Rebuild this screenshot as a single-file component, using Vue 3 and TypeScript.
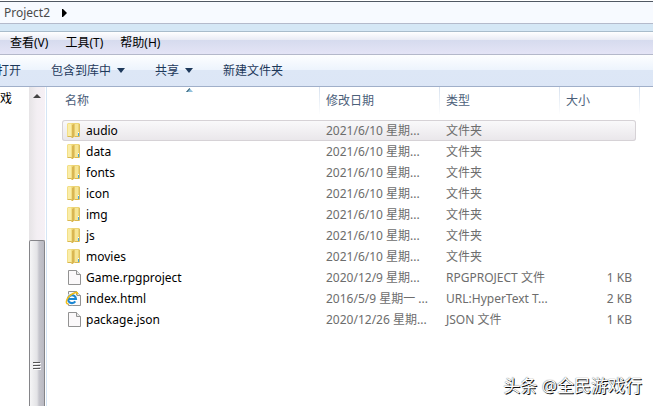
<script setup lang="ts">
import { ref } from 'vue'

type Kind = 'folder' | 'file' | 'web'

interface Entry {
  name: string
  date: string
  type: string
  size: string
  kind: Kind
}

const menus = ['查看(V)', '工具(T)', '帮助(H)']

const commands = [
  { label: '打开', menu: false },
  { label: '包含到库中', menu: true },
  { label: '共享', menu: true },
  { label: '新建文件夹', menu: false },
]

const folders: Entry[] = ['audio', 'data', 'fonts', 'icon', 'img', 'js', 'movies'].map((name) => ({
  name,
  date: '2021/6/10 星期...',
  type: '文件夹',
  size: '',
  kind: 'folder',
}))

const entries: Entry[] = [
  ...folders,
  { name: 'Game.rpgproject', date: '2020/12/9 星期...', type: 'RPGPROJECT 文件', size: '1 KB', kind: 'file' },
  { name: 'index.html', date: '2016/5/9 星期一 ...', type: 'URL:HyperText T...', size: '2 KB', kind: 'web' },
  { name: 'package.json', date: '2020/12/26 星期...', type: 'JSON 文件', size: '1 KB', kind: 'file' },
]

const selected = ref('audio')
</script>

<template>
  <div class="explorer">
    <nav class="address">
      <a href="#" class="crumb">Project2</a>
      <svg class="crumb-arrow" width="6" height="8" viewBox="0 0 6 8"><path d="M0 0h1l4 4-4 4H0z" fill="#000" /></svg>
    </nav>
    <div class="glass"></div>
    <div class="menubar">
      <button v-for="menu in menus" :key="menu" type="button">{{ menu }}</button>
    </div>
    <div class="toolbar">
      <button v-for="command in commands" :key="command.label" type="button">
        {{ command.label }}
        <svg v-if="command.menu" width="8" height="5" viewBox="0 0 8 5"><path d="M0 0h8L4 5z" fill="#1e395b" /></svg>
      </button>
    </div>

    <div class="body">
      <aside class="tree"><span>戏</span></aside>
      <div class="scrollbar">
        <svg class="up" width="8" height="5" viewBox="0 0 8 5"><path d="M4 0l4 4H0z" fill="#444" /></svg>
        <div class="thumb">
          <svg width="8" height="9" viewBox="0 0 8 9">
            <path d="M0 1.5h7M0 4.5h7M0 7.5h7" stroke="#555" />
            <path d="M1 2.5h7M1 5.5h7M1 8.5h7" stroke="#fff" />
          </svg>
        </div>
      </div>

      <main class="pane">
        <table>
          <thead>
            <tr>
              <th class="sorted">
                名称
                <svg class="sort" width="7" height="4" viewBox="0 0 7 4"><path d="M3.5 0L7 4H0z" fill="#8fc0dc" /><path d="M3.5 0L0 4h1.5L4 1z" fill="#3d6478" /></svg>
              </th>
              <th>修改日期</th>
              <th>类型</th>
              <th>大小</th>
            </tr>
          </thead>
          <tbody>
            <tr
              v-for="entry in entries"
              :key="entry.name"
              :class="{ selected: entry.name === selected }"
              @click="selected = entry.name"
            >
              <td class="name">
                <svg v-if="entry.kind === 'folder'" width="16" height="17" viewBox="0 0 16 17">
                  <path d="M4 1h8l1 1v12l-1 1H6z" fill="#ecd475" />
                  <path d="M8 2h3v12H8z" fill="#f6e595" />
                  <path d="M12 2h1v12h-1z" fill="#dcbf60" />
                  <path d="M0 2l1-1h3l2 2v13l-2-1H1l-1-1z" fill="#f3df86" />
                  <path d="M1 2h3v12H1z" fill="#faeda9" />
                  <path d="M0 14h4l2 1v1H5l-1-1H1z" fill="#d9b850" />
                  <path d="M5 3l2-1v13l-2 1z" fill="#d9b652" />
                  <path d="M7 2h1v12l-1 1z" fill="#e6ca6c" />
                  <path d="M8 14h5l-1 1H8z" fill="#d9b850" />
                  <path d="M11 11h1v3h-1z" fill="#49a7db" />
                  <path d="M11 10h1v1h-1z" fill="#fff" />
                </svg>
                <svg v-else width="16" height="17" viewBox="0 0 16 17" overflow="visible">
                  <path d="M1.500 1.500h8l4 4v10h-12z" fill="#fbf9fa" stroke="#929292" />
                  <path d="M9.500 1.500v4h4" fill="#e9e9e9" stroke="#929292" />
                  <g v-if="entry.kind === 'web'" fill="none">
                    <path d="M1.500 9h7.500A4 4 0 1 0 8.300 11.400" stroke="#fff" stroke-width="4" />
                    <path d="M1.500 9h7.500A4 4 0 1 0 8.300 11.400" stroke="#1d87d2" stroke-width="2.200" />
                    <path d="M1.500 14C-3 14.500-.5 5.500 8.500 2.500C10 2 11 3 10 4.500" stroke="#f1bd19" stroke-width="1.500" />
                  </g>
                </svg>
                <span>{{ entry.name }}</span>
              </td>
              <td>{{ entry.date }}</td>
              <td>{{ entry.type }}</td>
              <td class="size">{{ entry.size }}</td>
            </tr>
          </tbody>
        </table>
      </main>
    </div>
    <p class="watermark">头条 @全民游戏行</p>
  </div>
</template>

<style>
body {
  margin: 0;
}
</style>

<style scoped>
.explorer {
  position: relative;
  display: flex;
  flex-direction: column;
  box-sizing: border-box;
  min-height: 100vh;
  overflow: hidden;
  background: #fff;
  color: #000;
  font: 12px/16px 'Noto Sans', 'Noto Sans CJK SC', sans-serif;
}

button {
  padding: 0;
  border: 0;
  background: none;
  font: inherit;
  color: inherit;
  white-space: nowrap;
}

.address {
  display: flex;
  align-items: center;
  gap: 12px;
  height: 21px;
  margin-top: 1px;
  padding-left: 4px;
  border-top: 1px solid #505863;
  border-bottom: 1px solid #b4bacb;
  background: #f7faff;
}

.crumb {
  color: #4a4a4a;
  text-decoration: none;
}

.glass {
  height: 7px;
  border-bottom: 1px solid #a9bccb;
  background: #d5e7f5;
}

.menubar {
  display: flex;
  align-items: center;
  gap: 17px;
  height: 22px;
  padding-left: 10px;
  border-bottom: 1px solid #b4b8ca;
  background: linear-gradient(#fff, #e9ebf5 36%, #d6dbee 37%, #e4e4f6);
}

.toolbar {
  display: flex;
  align-items: center;
  gap: 30px;
  height: 31px;
  margin-left: -3px;
  border-bottom: 1px solid #a0afc9;
  background: linear-gradient(#fdfeff, #edf4fd 48%, #dde7f6 50%, #dce6f6);
  color: #1e395b;
}

.toolbar button {
  display: flex;
  align-items: center;
  gap: 6px;
}

.body {
  display: flex;
  flex: 1;
}

.tree {
  width: 29px;
  padding-top: 4px;
}

.scrollbar {
  display: flex;
  flex-direction: column;
  align-items: center;
  width: 16px;
  margin-right: 1px;
  background: linear-gradient(90deg, #e6e4e6, #f3eff3 50%, #f6f0f5);
}

.up {
  margin-top: 7px;
}

.thumb {
  display: flex;
  flex: 1;
  align-items: center;
  justify-content: center;
  box-sizing: border-box;
  width: 100%;
  margin-top: 141px;
  padding-top: 83px;
  border: 1px solid #858589;
  border-bottom: 0;
  border-radius: 2px 2px 0 0;
  background: linear-gradient(90deg, #f5f5f6, #e3e3e6 50%, #c5c5cc 65%, #b9b9c2);
}

.pane {
  flex: 1;
  min-width: 0;
  padding: 0 13px 0 15px;
  border-left: 1px solid #d5e5f5;
}

table,
thead,
tbody {
  display: block;
}

tr {
  display: grid;
  grid-template-columns: minmax(0, 1fr) 120px 120px 80px;
}

th,
td {
  padding: 0 6px;
  font-weight: normal;
  text-align: left;
  white-space: nowrap;
}

th {
  position: relative;
  height: 27px;
  line-height: 27px;
  border-right: 1px solid;
  border-image: linear-gradient(#d5e0ee, #fff) 1;
  color: #4c607a;
}

th:first-child {
  padding-left: 3px;
}

.sort {
  position: absolute;
  top: 1px;
  left: calc(50% - 5px);
}

tbody {
  margin: 6px 4px 0 0;
}

tbody tr {
  grid-template-columns: minmax(0, 1fr) 120px 120px 76px;
  height: 21px;
  border-radius: 3px;
}

td {
  line-height: 21px;
  color: #6d6d6d;
}

.selected {
  background: linear-gradient(#fafafb, #e9e6ea);
  box-shadow: inset 0 0 0 1px #d6d2d6;
}

.name {
  display: flex;
  align-items: center;
  gap: 3px;
  padding-left: 5px;
  color: #000;
}

.size {
  padding-right: 4px;
  text-align: right;
}

.watermark {
  position: absolute;
  right: 11px;
  bottom: 8px;
  margin: 0;
  color: #fff;
  font-size: 17px;
  line-height: 24px;
  text-shadow: 1px 1px 0 #111, 0 0 1px #333;
}
</style>
